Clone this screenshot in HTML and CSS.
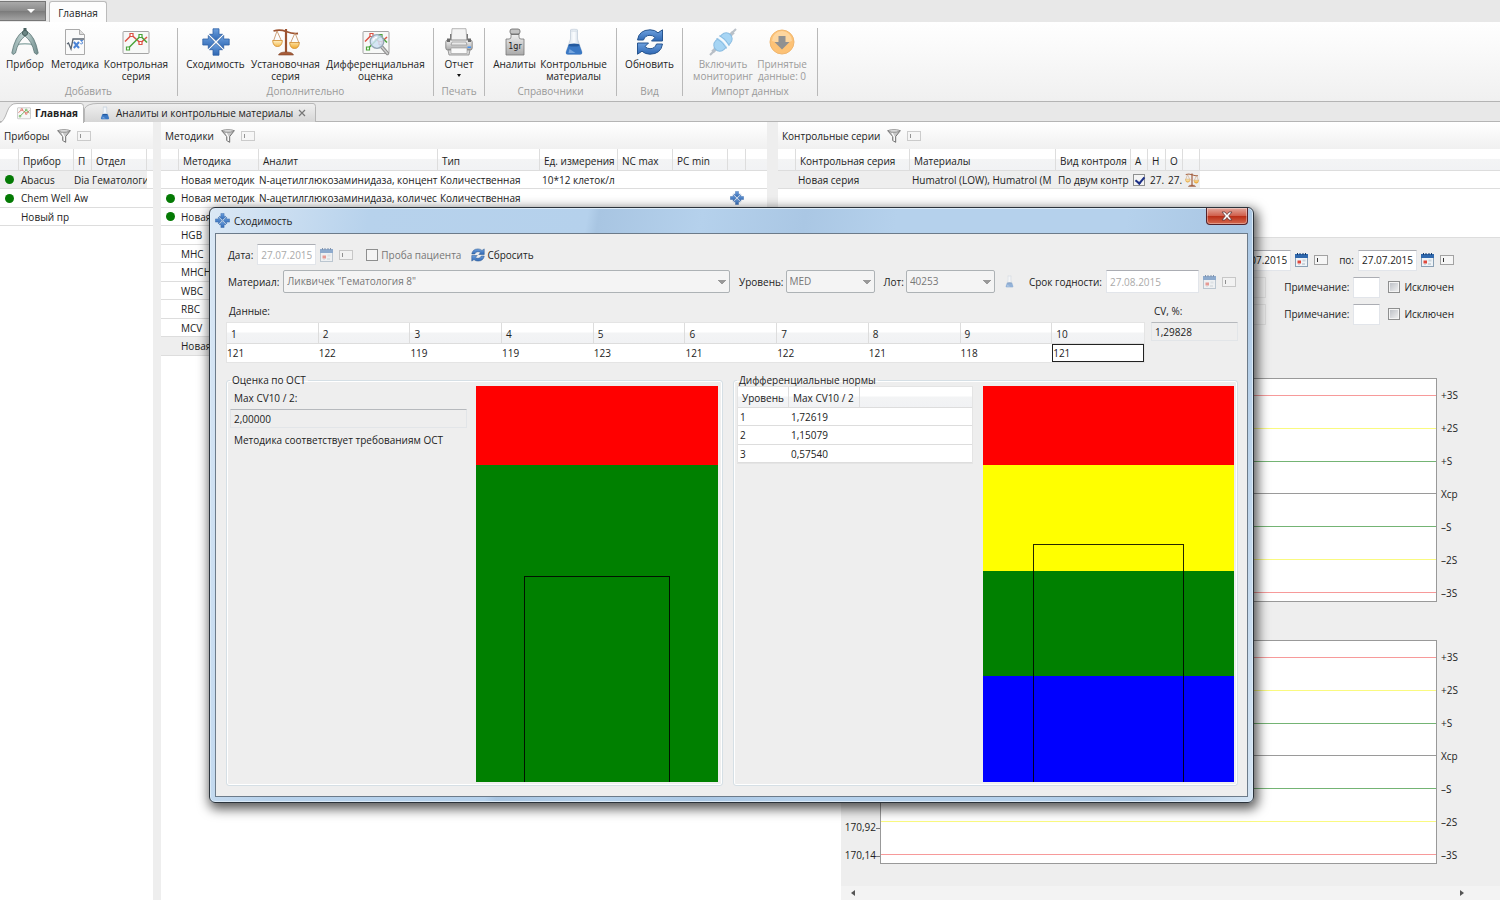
FILE: index.html
```html
<!DOCTYPE html>
<html lang="ru">
<head>
<meta charset="utf-8">
<title>Контроль качества</title>
<link rel="stylesheet" href="styles.css">
</head>
<body>
<svg class="defs" aria-hidden="true">
  <defs>
    <linearGradient id="g-steel" x1="0" y1="0" x2="1" y2="0"><stop offset="0" stop-color="#8fa9a9"/><stop offset=".5" stop-color="#c5d8d6"/><stop offset="1" stop-color="#6f8b8b"/></linearGradient>
    <linearGradient id="g-blue" x1="0" y1="0" x2="0" y2="1"><stop offset="0" stop-color="#6da0de"/><stop offset="1" stop-color="#2f68b4"/></linearGradient>
    <linearGradient id="g-gray" x1="0" y1="0" x2="0" y2="1"><stop offset="0" stop-color="#f2f2f2"/><stop offset="1" stop-color="#a9a9a9"/></linearGradient>
    <linearGradient id="g-gold" x1="0" y1="0" x2="0" y2="1"><stop offset="0" stop-color="#fff0c4"/><stop offset="1" stop-color="#f0a92c"/></linearGradient>
    <linearGradient id="g-flask" x1="0" y1="0" x2="1" y2="0"><stop offset="0" stop-color="#c6d2de"/><stop offset=".5" stop-color="#fbfdff"/><stop offset="1" stop-color="#b3c2d2"/></linearGradient>
    <linearGradient id="g-tab" x1="0" y1="0" x2="0" y2="1"><stop offset="0" stop-color="#f0f0f0"/><stop offset="1" stop-color="#d6d6d6"/></linearGradient>
  </defs>
  <symbol id="i-compass" viewBox="0 0 28 28">
    <path d="M5 17Q14 14.500 23 17" fill="none" stroke="#9bb3b1" stroke-width="1.600"/>
    <path d="M12.500 3Q4 8 .8 25l1.200 1.500 2.500-1.500Q7 13 14 8Q21 13 23.500 25l2.500 1.500 1.200-1.500Q24 8 15.500 3z" fill="url(#g-steel)" stroke="#5d7676" stroke-width=".8"/>
    <circle cx="14" cy="5" r="2.600" fill="#6c8785" stroke="#496261"/><path d="M12.500 0h3v3h-3z" fill="#496261"/>
  </symbol>
  <symbol id="i-method" viewBox="0 0 28 28">
    <path d="M4.500 1.500h14l5 5v20h-19z" fill="#fafafa" stroke="#aaa"/><path d="M18.500 1.500v5h5" fill="#ddd" stroke="#aaa"/>
    <path d="M6 16l1.500-1 2.500 6 2-10h11" fill="none" stroke="#5a6470" stroke-width="1.300"/>
    <path d="M12.800 14l5.200 6M18 14l-5.200 6" stroke="#4b84d6" stroke-width="2"/><path d="M19.300 12.500h2.500l-1.300 1.300q1.700.5.900 1.700-.9.700-2.100.1" fill="none" stroke="#4b84d6"/>
  </symbol>
  <symbol id="i-series" viewBox="0 0 28 28">
    <rect x="1" y="3.500" width="26" height="22" rx="1" fill="#f7f8f7" stroke="#a4a4a4"/>
    <path d="M3 13.500L9.500 7 18.500 15 25 9" fill="none" stroke="#dc5144" stroke-width="1.500"/>
    <path d="M6 20.500L18.500 8 25 14.500" fill="none" stroke="#4aa43a" stroke-width="1.500"/>
    <g fill="#fff" stroke-width="1.200"><path stroke="#dc5144" d="M8 5.500h3v3H8zM17 13.500h3v3h-3z"/><path stroke="#4aa43a" d="M4.500 19h3v3h-3zM17 6.500h3v3h-3z"/></g>
  </symbol>
  <symbol id="i-converge" viewBox="0 0 28 28">
    <g fill="url(#g-blue)" stroke="#2f61a4" stroke-width=".8"><path d="M11 .8h6v5.500h3.500L14 12.500 7.500 6.300H11z"/><path d="M11 27.200h6v-5.500h3.500L14 15.500l-6.500 6.200H11z"/><path d="M.8 11v6h5.500v3.500L12.500 14 6.300 7.500V11z"/><path d="M27.200 11v6h-5.500v3.500L15.500 14l6.200-6.500V11z"/></g>
  </symbol>
  <symbol id="i-scales" viewBox="0 0 28 28">
    <g stroke="#9c5230" fill="none"><path d="M1.500 3Q8 1 14 3.500T26 5.500" stroke-width="1.800"/><path d="M14 1v23" stroke-width="2.200"/><path d="M5 3L1.500 13M5 3l4.500 10M23 5l-4.500 10M23 5l4 10" stroke-width=".8" stroke="#c08a5c"/></g>
    <path d="M.6 12.500h9.800q-.5 6-4.900 6t-4.900-6zM17.600 14.500h9.800q-.5 6-4.900 6t-4.900-6z" fill="url(#g-gold)" stroke="#d08a28" stroke-width=".8"/>
    <path d="M6.500 27q1-3 7.500-3t7.500 3z" fill="#a85c38" stroke="#7e4225" stroke-width=".6"/>
  </symbol>
  <symbol id="i-lens" viewBox="0 0 28 28">
    <use href="#i-series"/><path d="M19 18l6.500 7.500" stroke="#8d8d8d" stroke-width="3.500" stroke-linecap="round"/><path d="M19 18l6.500 7.500" stroke="#cfcfcf" stroke-width="1.500" stroke-linecap="round"/>
    <circle cx="15" cy="13.500" r="6.800" fill="#cfe2f4" fill-opacity=".85" stroke="#94a5b5" stroke-width="1.300"/><path d="M11 12.500q1-3 4-3" stroke="#fff" fill="none" stroke-width="1.500"/>
  </symbol>
  <symbol id="i-printer" viewBox="0 0 28 28">
    <path d="M5 13V6h18v7z" fill="#777"/><path d="M7 .7h14l1 14H6z" fill="#f3f3f3" stroke="#a5a5a5" stroke-width=".8"/>
    <rect x=".8" y="12" width="26.400" height="10" rx="2" fill="url(#g-gray)" stroke="#777" stroke-width=".8"/><path d="M2 10.500h3V14H2zM23 10.500h3V14h-3z" fill="#6b6b6b"/><path d="M7 14h14l1 3H6z" fill="#e9e9e9" stroke="#888" stroke-width=".6"/><path d="M3 22h22l-1 5H4z" fill="#d8d8d8" stroke="#888" stroke-width=".8"/><path d="M6 20h16v5.500H6z" fill="#fafafa" stroke="#999" stroke-width=".6"/><path d="M22.500 18.500H26v1.500h-3.500z" fill="#4794f0"/>
  </symbol>
  <symbol id="i-weight" viewBox="0 0 28 28">
    <path d="M10 5.500h8v3.500q0 2 2 2h3v16H5V11h3q2 0 2-2z" fill="url(#g-gray)" stroke="#777" stroke-width=".8"/><rect x="9" y="1" width="10" height="5" rx="2" fill="#c4c4c4" stroke="#666" stroke-width=".8"/><path d="M10 6.500h8" stroke="#777"/>
    <text x="14" y="21" class="gr" text-anchor="middle">1gr</text>
  </symbol>
  <symbol id="i-flask" viewBox="0 0 28 28">
    <path d="M10.500 2h7v9l4.500 13q.5 2.500-2 2.500H8q-2.500 0-2-2.500l4.500-13z" fill="url(#g-flask)" stroke="#b5c3d1" stroke-width=".6"/><path d="M8.500 17h11l2.500 7q.5 2.500-2 2.500H8q-2.500 0-2-2.500z" fill="#3a78c4"/><ellipse cx="14" cy="17" rx="5.500" ry="1.500" fill="#245a9f"/><path d="M9.500 21l-1 4h7z" fill="#76a6df"/><ellipse cx="14" cy="2.200" rx="3.600" ry="1" fill="#eef3f8" stroke="#b5c3d1" stroke-width=".5"/>
  </symbol>
  <symbol id="i-refresh" viewBox="0 0 28 28">
    <g fill="url(#g-blue)" stroke="#27558f" stroke-width="1"><path d="M1.500 12Q3 2 14 1.800q5 0 8 3l4.500-3V13H15.500l3.500-3.500q-2-2.200-5-2.200-5 0-6.500 4.700z"/><path d="M26.500 16Q25 26 14 26.200q-5 0-8-3l-4.500 3V15h11L9 18.500q2 2.200 5 2.200 5 0 6.500-4.700z"/></g>
  </symbol>
  <symbol id="i-plug" viewBox="0 0 28 28">
    <path d="M1 27l7-7M20 8l7-7" stroke="#8e9aa6" stroke-width="2"/><path d="M3.500 24l4-4M24.500 4l-4 4" stroke="#8e9aa6" stroke-width="3.500"/>
    <rect x="3.500" y="8" width="21" height="12" rx="6" transform="rotate(-45 14 14)" fill="#6fbcf0" stroke="#3f92d0"/><path d="M9 9q6 3 10 10" stroke="#f4f9fd" stroke-width="2.200" fill="none"/><path d="M7.500 10.500q6 3 10 10M10.500 7.500q6 3 10 10" stroke="#3f92d0" fill="none"/>
  </symbol>
  <symbol id="i-down" viewBox="0 0 28 28">
    <circle cx="14" cy="14" r="12" fill="#ff9d1e" stroke="#e98a14"/><path d="M4 13a10 10 0 0 1 20 0q-10 4-20 0" fill="#ffbd62"/><path d="M10.500 8h7v6h4L14 21.500 6.500 14h4z" fill="#4b4b4b"/>
  </symbol>
  <symbol id="i-funnel" viewBox="0 0 14 14">
    <path d="M.7 1.700h12.600L8.700 7.500v5.800l-3-1.800v-4z" fill="#c9c9c9" stroke="#666" stroke-width=".9"/><ellipse cx="7" cy="1.900" rx="6" ry="1.200" fill="#eee" stroke="#666" stroke-width=".7"/><path d="M5 4l2.300 4v4" stroke="#fff" stroke-width="1.200" fill="none"/>
  </symbol>
  <symbol id="i-pin" viewBox="0 0 14 10">
    <rect x=".5" y=".5" width="13" height="9" fill="#f6f6f6" stroke="#a2a2a2"/><path d="M3.500 3v4" stroke="#333"/>
  </symbol>
  <symbol id="i-cal" viewBox="0 0 13 14">
    <rect x=".5" y="1.500" width="12" height="12" fill="#eef3f7" stroke="#8aa0b4"/><path d="M0 1h13v4H0z" fill="#2f68ad"/><path d="M2.500 0v2M5 0v2M8 0v2M10.500 0v2" stroke="#173d70"/><path d="M7.500 6.500h3v2h-3zM3 11h2v1H3zM7 10h3v2H7z" fill="#ccd5dc"/><path d="M2.500 7.500h3.500v3H2.500z" fill="#e0483c"/>
  </symbol>
</svg>

<div class="app">
  <nav class="ribbon-tabs">
    <button class="app-menu" aria-label="Меню"></button>
    <button class="ribbon-tab">Главная</button>
  </nav>

  <header class="ribbon">
    <section class="group g-add">
      <div class="items">
        <button class="tool t-50"><svg class="ico"><use href="#i-compass"/></svg>Прибор</button>
        <button class="tool t-50"><svg class="ico"><use href="#i-method"/></svg>Методика</button>
        <button class="tool t-72"><svg class="ico"><use href="#i-series"/></svg>Контрольная<br>серия</button>
      </div>
      <h2>Добавить</h2>
    </section>
    <section class="group g-extra">
      <div class="items">
        <button class="tool t-68"><svg class="ico"><use href="#i-converge"/></svg>Сходимость</button>
        <button class="tool t-72"><svg class="ico"><use href="#i-scales"/></svg>Установочная<br>серия</button>
        <button class="tool t-108"><svg class="ico"><use href="#i-lens"/></svg>Дифференциальная<br>оценка</button>
      </div>
      <h2>Дополнительно</h2>
    </section>
    <section class="group g-print">
      <div class="items"><button class="tool t-50"><svg class="ico"><use href="#i-printer"/></svg>Отчет<i class="drop"></i></button></div>
      <h2>Печать</h2>
    </section>
    <section class="group g-refs">
      <div class="items">
        <button class="tool t-50"><svg class="ico"><use href="#i-weight"/></svg>Аналиты</button>
        <button class="tool t-68"><svg class="ico"><use href="#i-flask"/></svg>Контрольные<br>материалы</button>
      </div>
      <h2>Справочники</h2>
    </section>
    <section class="group g-view">
      <div class="items"><button class="tool t-50"><svg class="ico"><use href="#i-refresh"/></svg>Обновить</button></div>
      <h2>Вид</h2>
    </section>
    <section class="group g-import">
      <div class="items">
        <button class="tool t-68" disabled><svg class="ico"><use href="#i-plug"/></svg>Включить<br>мониторинг</button>
        <button class="tool t-50" disabled><svg class="ico"><use href="#i-down"/></svg>Принятые<br>данные: 0</button>
      </div>
      <h2>Импорт данных</h2>
    </section>
  </header>

  <nav class="doc-tabs">
    <button class="doc-tab current">
      <svg class="shape" viewBox="0 0 84 20" preserveAspectRatio="none"><path d="M0 20Q4 18 7 9T17 .5H81q2.500 0 2.500 3V20" fill="#fff" stroke="#b4b4b4"/></svg>
      <svg class="tab-ico"><use href="#i-series"/></svg><span>Главная</span>
    </button>
    <button class="doc-tab second">
      <svg class="shape" viewBox="0 0 232 20" preserveAspectRatio="none"><path d="M.5 20V6Q3 .5 14 .5H229q2.500 0 2.500 3V20" fill="url(#g-tab)" stroke="#b4b4b4"/></svg>
      <svg class="tab-ico"><use href="#i-flask"/></svg><span>Аналиты и контрольные материалы</span>
      <svg class="tab-x" viewBox="0 0 8 8"><path d="M1 1l6 6M7 1L1 7" stroke="#777" stroke-width="1.200"/></svg>
    </button>
  </nav>

  <main class="workspace">
    <section class="panel devices">
      <div class="panel-head"><h3>Приборы</h3><svg class="funnel"><use href="#i-funnel"/></svg><svg class="pin faded"><use href="#i-pin"/></svg></div>
      <table class="grid">
        <colgroup><col class="c-19"><col class="c-55"><col class="c-18"><col class="c-55"><col></colgroup>
        <thead><tr><th></th><th>Прибор</th><th>П</th><th>Отдел</th><th></th></tr></thead>
        <tbody>
          <tr class="sel"><td><i class="dot"></i></td><td>Abacus</td><td class="tight">Dia</td><td class="tight">Гематологи</td><td class="rest"></td></tr>
          <tr><td><i class="dot"></i></td><td>Chem Well</td><td class="tight">Aw</td><td></td><td></td></tr>
          <tr><td></td><td>Новый пр</td><td></td><td></td><td></td></tr>
        </tbody>
      </table>
    </section>

    <section class="panel methods">
      <div class="panel-head"><h3>Методики</h3><svg class="funnel"><use href="#i-funnel"/></svg><svg class="pin faded"><use href="#i-pin"/></svg></div>
      <table class="grid">
        <colgroup><col class="c-18"><col class="c-80"><col class="c-179"><col class="c-102"><col class="c-78"><col class="c-55"><col class="c-55"><col class="c-18"><col></colgroup>
        <thead><tr><th></th><th>Методика</th><th>Аналит</th><th>Тип</th><th>Ед. измерения</th><th>NC max</th><th>PC min</th><th></th><th></th></tr></thead>
        <tbody>
          <tr><td></td><td>Новая методик</td><td class="tight">N-ацетилглюкозаминидаза, концент</td><td>Количественная</td><td>10*12 клеток/л</td><td></td><td></td><td></td><td></td></tr>
          <tr><td><i class="dot"></i></td><td>Новая методик</td><td class="tight">N-ацетилглюкозаминидаза, количес</td><td>Количественная</td><td></td><td></td><td></td><td><svg class="cell-ico"><use href="#i-converge"/></svg></td><td></td></tr>
          <tr><td><i class="dot"></i></td><td>Новая</td><td></td><td></td><td></td><td></td><td></td><td></td><td></td></tr>
          <tr><td></td><td>HGB</td><td></td><td></td><td></td><td></td><td></td><td></td><td></td></tr>
          <tr><td></td><td>MHC</td><td></td><td></td><td></td><td></td><td></td><td></td><td></td></tr>
          <tr><td></td><td>MHCH</td><td></td><td></td><td></td><td></td><td></td><td></td><td></td></tr>
          <tr><td></td><td>WBC</td><td></td><td></td><td></td><td></td><td></td><td></td><td></td></tr>
          <tr><td></td><td>RBC</td><td></td><td></td><td></td><td></td><td></td><td></td><td></td></tr>
          <tr><td></td><td>MCV</td><td></td><td></td><td></td><td></td><td></td><td></td><td></td></tr>
          <tr class="sel"><td></td><td>Новая</td><td></td><td></td><td></td><td></td><td></td><td></td><td></td></tr>
        </tbody>
      </table>
    </section>

    <section class="panel series">
      <div class="panel-head"><h3>Контрольные серии</h3><svg class="funnel"><use href="#i-funnel"/></svg><svg class="pin faded"><use href="#i-pin"/></svg></div>
      <table class="grid">
        <colgroup><col class="c-18"><col class="c-114"><col class="c-146"><col class="c-75"><col class="c-17"><col class="c-18"><col class="c-17"><col class="c-17"><col></colgroup>
        <thead><tr><th></th><th>Контрольная серия</th><th>Материалы</th><th>Вид контроля</th><th>А</th><th>Н</th><th>О</th><th></th><th></th></tr></thead>
        <tbody>
          <tr class="sel"><td></td><td>Новая серия</td><td>Humatrol (LOW), Humatrol (M</td><td>По двум контр</td><td><input type="checkbox" class="check" checked aria-label="Активна"></td><td>27.</td><td>27.</td><td><svg class="cell-ico"><use href="#i-scales"/></svg></td><td class="rest"></td></tr>
        </tbody>
      </table>
    </section>

    <div class="filler"></div>

    <section class="charts">
      <form class="filters">
        <div class="line">
          <input class="date" value="27.07.2015" aria-label="Дата с"><svg class="cal"><use href="#i-cal"/></svg><svg class="pin"><use href="#i-pin"/></svg>
          <label class="to" for="to">по:</label><input class="date" id="to" value="27.07.2015"><svg class="cal"><use href="#i-cal"/></svg><svg class="pin"><use href="#i-pin"/></svg>
        </div>
        <div class="line">
          <input class="value" readonly aria-label="Значение 1"><label for="n1">Примечание:</label><input class="note" id="n1"><label class="excl"><input type="checkbox" class="check shade">Исключен</label>
        </div>
        <div class="line">
          <input class="value" readonly aria-label="Значение 2"><label for="n2">Примечание:</label><input class="note" id="n2"><label class="excl"><input type="checkbox" class="check shade">Исключен</label>
        </div>
      </form>
      <div class="chart">
        <div class="scale"></div>
        <div class="plot"><i class="s3"></i><i class="s2"></i><i class="s1"></i><i class="mean"></i><i class="s1"></i><i class="s2"></i><i class="s3"></i></div>
        <div class="sigmas"><span>+3S</span><span>+2S</span><span>+S</span><span>Xср</span><span>–S</span><span>–2S</span><span>–3S</span></div>
      </div>
      <div class="chart">
        <div class="scale"><span>170,92</span><span>170,14</span></div>
        <div class="plot"><i class="s3"></i><i class="s2"></i><i class="s1"></i><i class="mean"></i><i class="s1"></i><i class="s2"></i><i class="s3"></i></div>
        <div class="sigmas"><span>+3S</span><span>+2S</span><span>+S</span><span>Xср</span><span>–S</span><span>–2S</span><span>–3S</span></div>
      </div>
      <div class="scrollbar"><i class="tri left"></i><i class="tri right"></i></div>
    </section>
  </main>
</div>

<div class="dialog" role="dialog" aria-labelledby="dlg-title">
  <div class="title-bar">
    <svg class="title-ico"><use href="#i-converge"/></svg><h1 id="dlg-title">Сходимость</h1>
    <button class="close" aria-label="Закрыть"><svg viewBox="0 0 12 10"><path d="M1 1h3l2 2.500L8 1h3L7.700 5 11 9H8L6 6.500 4 9H1l3.300-4z" fill="#fff" stroke="#5f3a3a" stroke-width=".8"/></svg></button>
  </div>
  <form class="dialog-body">
    <div class="row">
      <label for="d">Дата:</label><input class="date" id="d" value="27.07.2015" disabled><svg class="cal faded"><use href="#i-cal"/></svg><svg class="pin faded"><use href="#i-pin"/></svg>
      <label class="patient"><input type="checkbox" class="check" disabled>Проба пациента</label>
      <button class="reset" type="button"><svg><use href="#i-refresh"/></svg>Сбросить</button>
    </div>
    <div class="row">
      <label for="m">Материал:</label><select id="m" class="grow" disabled><option>Ликвичек "Гематология 8"</option></select>
      <label class="lead" for="l">Уровень:</label><select id="l" class="short" disabled><option>MED</option></select>
      <label class="lead" for="lot">Лот:</label><select id="lot" class="short" disabled><option>40253</option></select>
      <svg class="mini-flask"><use href="#i-flask"/></svg>
      <label class="term" for="exp">Срок годности:</label><input class="expiry" id="exp" value="27.08.2015" disabled><svg class="cal faded"><use href="#i-cal"/></svg><svg class="pin faded"><use href="#i-pin"/></svg>
    </div>
    <div class="data">
      <div class="samples">
        <p>Данные:</p>
        <table class="grid wide">
          <thead><tr><th>1</th><th>2</th><th>3</th><th>4</th><th>5</th><th>6</th><th>7</th><th>8</th><th>9</th><th>10</th></tr></thead>
          <tbody><tr><td>121</td><td>122</td><td>119</td><td>119</td><td>123</td><td>121</td><td>122</td><td>121</td><td>118</td><td class="focus">121</td></tr></tbody>
        </table>
      </div>
      <div class="cv"><label for="cv">CV, %:</label><input class="result" id="cv" value="1,29828" readonly></div>
    </div>
    <div class="norms">
      <fieldset>
        <legend>Оценка по ОСТ</legend>
        <div class="ost">
          <label for="mx">Max CV10 / 2:</label><input class="result" id="mx" value="2,00000" readonly>
          <p>Методика соответствует требованиям ОСТ</p>
        </div>
        <div class="bars"><i class="red"></i><i class="green tall"></i><b class="mark low"></b></div>
      </fieldset>
      <fieldset>
        <legend>Дифференциальные нормы</legend>
        <div class="levels">
          <table class="grid">
            <colgroup><col class="c-51"><col class="c-71"><col></colgroup>
            <thead><tr><th>Уровень</th><th>Max CV10 / 2</th><th></th></tr></thead>
            <tbody><tr><td>1</td><td>1,72619</td><td></td></tr><tr><td>2</td><td>1,15079</td><td></td></tr><tr><td>3</td><td>0,57540</td><td></td></tr></tbody>
          </table>
        </div>
        <div class="bars"><i class="red"></i><i class="yellow"></i><i class="green"></i><i class="blue"></i><b class="mark high"></b></div>
      </fieldset>
    </div>
  </form>
</div>
</body>
</html>
```
FILE: styles.css
```css
* { box-sizing: border-box; }
body { margin: 0; font: 10px/12px "Open Sans", "Noto Sans", sans-serif; color: #222; background: #eee; overflow: hidden; }
button, input, select { font: inherit; color: inherit; margin: 0; }
button { padding: 0; border: 0; background: none; }
h1, h2, h3, p { margin: 0; font: inherit; }
svg { display: block; flex: none; }
.defs { position: absolute; width: 0; height: 0; }
.gr { font: 8px "DejaVu Sans", sans-serif; fill: #222; }
.faded { opacity: .5; }

.app { display: flex; flex-direction: column; height: 100vh; }

/* Ribbon */
.ribbon-tabs { display: flex; align-items: flex-end; height: 22px; background: #e8e8e8; }
.app-menu { width: 46px; height: 20px; margin-bottom: 1px; border: 1px solid #777; border-left: 0; background: linear-gradient(#a9a9a9, #8a8a8a 50%, #7b7b7b 51%, #a2a2a2); display: flex; align-items: center; padding-left: 27px; }
.app-menu::after { content: ""; border: 4px solid transparent; border-top-color: #fff; border-bottom: 0; }
.ribbon-tab { width: 58px; height: 21px; margin-left: 3px; background: #fdfdfd; border: 1px solid #bbb; border-bottom: 0; border-radius: 3px 3px 0 0; padding-top: 2px; }
.ribbon { display: flex; height: 80px; padding-top: 6px; background: linear-gradient(#fff, #f0f0f0); border-bottom: 1px solid #b4b4b4; }
.group { height: 68px; border-right: 1px solid #b9b9b9; display: flex; flex-direction: column; justify-content: space-between; }
.group h2 { text-align: center; color: #999; line-height: 10px; }
.items { display: flex; justify-content: center; align-items: flex-start; }
.tool { display: flex; flex-direction: column; align-items: center; white-space: nowrap; text-align: center; line-height: 12px; }
.tool:disabled { color: #9b9b9b; }
.tool:disabled .ico { opacity: .6; }
.ico { width: 28px; height: 28px; margin-bottom: 2px; }
.t-50 { width: 50px; }
.t-68 { width: 68px; }
.t-72 { width: 72px; }
.t-108 { width: 108px; }
.g-add { width: 178px; }
.g-add .items { justify-content: flex-start; }
.g-extra { width: 256px; }
.g-print { width: 51px; }
.g-refs { width: 132px; }
.g-view { width: 66px; }
.g-import { width: 135px; }
.g-import .items, .g-refs .items { padding-right: 4px; }
.drop { border: 2px solid transparent; border-top: 3px solid #111; margin-top: 4px; }

/* Document tabs */
.doc-tabs { display: flex; height: 20px; padding-top: 1px; background: #e8e8e8; border-bottom: 1px solid #b4b4b4; }
.doc-tab { position: relative; display: flex; align-items: center; height: 19px; }
.doc-tab > * { position: relative; }
.doc-tab .shape { position: absolute; inset: 0; width: 100%; height: 100%; }
.doc-tab.current { width: 84px; padding-left: 17px; font-weight: bold; height: 20px; }
.doc-tab.second { width: 232px; padding-left: 14px; }
.tab-ico { width: 14px; height: 14px; margin-right: 4px; }
.tab-x { width: 8px; height: 8px; margin-left: 5px; }

/* Workspace */
.workspace { flex: 1; display: grid; min-height: 0; grid-template-columns: 153px 8px 606px 11px 63px 1fr; grid-template-rows: 115px 1fr; }
.panel { min-width: 0; overflow: hidden; background: linear-gradient(#fff, #f0f0f0 27px, #fff 27px); }
.devices { grid-column: 1; grid-row: 1 / 3; }
.methods { grid-column: 3; grid-row: 1 / 3; }
.series { grid-column: 5 / 7; grid-row: 1; }
.filler { grid-column: 4 / 6; grid-row: 2; background: #fff; }
.charts { grid-column: 6; grid-row: 2; }
.panel-head { display: flex; align-items: center; height: 27px; padding-left: 4px; }
.funnel { width: 14px; height: 14px; margin: 0 6px 0 7px; }
.pin { width: 14px; height: 10px; }
.cal { width: 13px; height: 14px; }

.grid { width: 100%; border-collapse: separate; border-spacing: 0; table-layout: fixed; }
.grid th { height: 22px; padding: 2px 0 0 4px; text-align: left; font-weight: normal; white-space: nowrap; overflow: hidden; background: linear-gradient(#fff 45%, #f3f4f5 50%, #f1f2f4); border-right: 1px solid #ddd; border-bottom: 1px solid #ddd; }
.grid th:last-child { border-right: 0; }
.grid td { height: 18px; padding: 0 0 0 2px; white-space: nowrap; overflow: hidden; background: #fff; border-bottom: 1px solid #ddd; }
.grid td.tight { padding-left: 0; }
.grid tr:nth-child(even) td { height: 19px; }
.grid tr.sel td { background: #eee; }
.grid tr.sel td.rest { background: #fff; }
.c-17 { width: 17px; }
.c-18 { width: 18px; }
.c-19 { width: 19px; }
.c-51 { width: 51px; }
.c-55 { width: 55px; }
.c-71 { width: 71px; }
.c-75 { width: 75px; }
.c-78 { width: 78px; }
.c-80 { width: 80px; }
.c-102 { width: 102px; }
.c-114 { width: 114px; }
.c-146 { width: 146px; }
.c-179 { width: 179px; }
.dot { display: block; width: 9px; height: 9px; margin-left: 3px; border-radius: 50%; background: #047a04; }
.cell-ico { width: 14px; height: 14px; }

.check { appearance: none; display: block; flex: none; width: 12px; height: 12px; border: 1px solid #8e8f8f; background: #f4f4f4; }
.check.shade { box-shadow: inset 0 0 0 1px #f4f4f4; background: linear-gradient(135deg, #b8bcc2, #f4f4f4); }
.check:checked::after { content: ""; display: block; width: 4px; height: 7px; margin: 0 0 0 3px; border: solid #1c2f86; border-width: 0 2px 2px 0; transform: rotate(40deg); }

/* Charts */
.charts { display: flex; flex-direction: column; border-top: 1px solid #ddd; }
.filters { height: 140px; padding-top: 11px; display: flex; flex-direction: column; gap: 5px; }
.line { display: flex; justify-content: flex-end; align-items: center; height: 22px; padding-right: 46px; }
.line .pin { margin-left: 6px; }
.line .cal { margin-left: 4px; }
input.date, input.note, input.expiry { border: 1px solid #e2e5ea; border-top-color: #abadb3; background: #fff; height: 21px; padding: 0 3px; }
input.date { width: 59px; }
input.note { width: 27px; margin: 0 8px 0 4px; }
input.value { width: 60px; height: 21px; border: 1px solid #ddd; background: #eee; margin-right: 18px; }
.to { margin: 0 4px 0 11px; }
.excl, .patient { display: flex; align-items: center; gap: 4px; }
.chart { display: grid; grid-template-columns: 39px 1fr 63px; height: 224px; margin-bottom: 38px; }
.chart + .chart { margin-bottom: 22px; }
.plot { display: flex; flex-direction: column; justify-content: space-between; padding: 16px 0 8px; background: #fff; border: 1px solid #999; }
.plot i { height: 1px; }
.s3 { background: #f79a9a; }
.s2 { background: #fafa80; }
.s1 { background: #74b474; }
.mean { background: #9a9a9a; }
.sigmas { display: flex; flex-direction: column; justify-content: space-between; padding: 9px 0 1px 4px; line-height: 16px; }
.scale { display: flex; flex-direction: column; justify-content: flex-end; gap: 12px; padding-bottom: 1px; text-align: right; line-height: 16px; white-space: nowrap; }
.scale span::after { content: ""; display: inline-block; width: 4px; height: 1px; background: #777; vertical-align: middle; }
.scrollbar { flex: 1; background: #f3f3f3; display: flex; justify-content: space-between; align-items: center; padding: 0 36px 0 10px; }
.tri { border: 3px solid transparent; }
.tri.left { border-right: 4px solid #555; border-left: 0; }
.tri.right { border-left: 4px solid #555; border-right: 0; }

/* Dialog window */
.dialog { position: absolute; left: 209px; top: 207px; right: 246px; height: 596px; display: flex; flex-direction: column; padding: 0 5px 5px; border: 1px solid #2b333b; border-radius: 6px; background: linear-gradient(100deg, #dbe8f5 0, #b7d2ec 14%, #b5d1ec 33%, #a8c5e2 34%, #b5d1ec 43%, #aac7e4 52%, #b5d1ec 60%, #b5d1ec 80%, #a9c6e3 90%, #d5e5f4); box-shadow: inset 0 0 0 1px #dcebf8, 2px 4px 12px 2px rgba(0, 0, 0, .65); }
.title-bar { display: flex; align-items: center; height: 25px; flex: none; }
.title-ico { width: 15px; height: 15px; margin-right: 4px; }
.close { display: flex; align-items: center; justify-content: center; width: 42px; height: 17px; margin-left: auto; align-self: flex-start; border: 1px solid #54222a; border-top: 0; border-radius: 0 0 4px 4px; background: linear-gradient(#e3a79c, #d1604d 48%, #b92c15 50%, #d4694f); box-shadow: inset 0 0 0 1px rgba(255, 255, 255, .35); }
.close svg { width: 12px; height: 10px; }
.dialog-body { flex: 1; display: flex; flex-direction: column; min-height: 0; padding: 7px 9px 10px 10px; border: 1px solid #6c7b8a; background: #eee; }
.row { display: flex; align-items: center; height: 27px; padding-left: 2px; }
.row .cal { margin-left: 4px; }
.row .pin { margin-left: 6px; margin-right: 2px; }
.row input, .row select { margin-left: 4px; }
.row input:disabled { color: #aaa; opacity: 1; }
.row select:disabled { color: #777; opacity: 1; }
.row .patient { margin-left: 11px; gap: 3px; color: #777; }
.row .patient input { margin: 0; }
.reset { display: flex; align-items: center; gap: 2px; margin-left: 10px; }
.reset svg { width: 14px; height: 14px; }
select { appearance: none; height: 23px; padding: 0 14px 2px 3px; border: 1px solid #adb2b5; border-radius: 2px; background: linear-gradient(45deg, transparent 50%, #999 50%) right 7px top 9px / 4px 4px no-repeat, linear-gradient(-45deg, transparent 50%, #999 50%) right 3px top 9px / 4px 4px no-repeat, #f4f4f4; }
select.grow { flex: 1; min-width: 0; }
.row select.short { width: 89px; margin-left: 2px; }
.lead { margin-left: 9px; }
.mini-flask { width: 13px; height: 13px; margin-left: 8px; opacity: .5; }
.term { margin-left: 13px; }
input.expiry { width: 93px; height: 23px; }
.data { display: flex; gap: 6px; margin-top: 5px; }
.samples { flex: 1; }
.samples p, .cv label { display: block; height: 22px; padding: 5px 0 0 3px; }
.cv { width: 87px; }
.grid.wide { border: 1px solid #e4e4e4; }
.grid.wide th, .levels .grid th { height: 21px; }
.grid.wide td { padding-left: 0; border-bottom: 0; height: 18px; }
.grid.wide td.focus { border: 1px solid #222; padding-left: 0; }
input.result { width: 100%; height: 19px; border: 1px solid #e2e5e8; border-top-color: #b6b9bd; background: #eee; padding: 0 3px; }
.norms { flex: 1; display: grid; grid-template-columns: 497px 1fr; gap: 10px; margin-top: 11px; min-height: 0; }
fieldset { margin: 0; padding: 0 4px 3px 3px; min-width: 0; border: 1px solid #d5dfe5; border-radius: 3px; box-shadow: inset 0 0 0 1px #fff; display: grid; grid-template-columns: 1fr 242px; column-gap: 9px; }
fieldset + fieldset { grid-template-columns: 1fr 251px; column-gap: 10px; padding-right: 3px; }
legend { padding: 0 2px; height: 12px; }
.ost label { display: block; padding: 6px 4px 5px; }
.ost p { padding: 6px 4px; }
.levels .grid { border: 1px solid #e4e4e4; }
.bars { position: relative; display: flex; flex-direction: column; }
.bars i { display: block; flex: 106; }
.bars .red { flex: 79; background: #f00; }
.bars .green { background: #008000; }
.bars .tall { flex: 317; }
.bars .yellow { background: #ff0; }
.bars .blue { background: #00f; }
.mark { position: absolute; left: 20%; right: 20%; bottom: 0; border: 1px solid rgba(0, 0, 0, .85); border-bottom: 0; }
.mark.low { height: 52%; }
.mark.high { height: 60%; }
```
